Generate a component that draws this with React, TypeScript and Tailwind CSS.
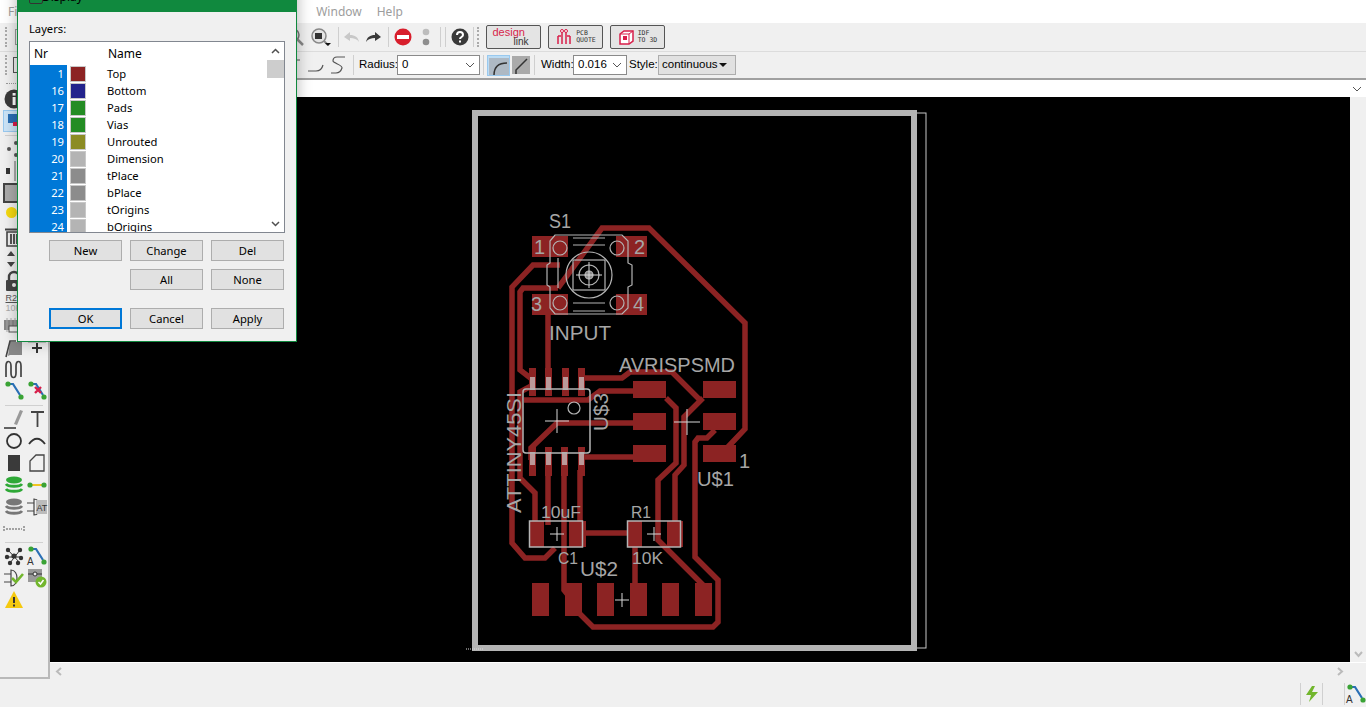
import React from "react";

const UI = { fontFamily: '"Noto Sans", "Open Sans", sans-serif' };
const TB = { fontFamily: '"Liberation Sans", Arial, sans-serif' };
const RED = "#8c2323";
const GR = "#b4b4b4";

function Ic({ children, w = 22, h = 22 }: { children: React.ReactNode; w?: number; h?: number }) {
  return (
    <svg width={w} height={h} viewBox={`0 0 ${w} ${h}`} className="block shrink-0">
      {children}
    </svg>
  );
}

function Route({ x = false, a = false }: { x?: boolean; a?: boolean }) {
  return (
    <Ic>
      <path d="M5 4H10L17 15" fill="none" stroke="#2a6fb5" strokeWidth="2.2" />
      <circle cx="5" cy="4" r="2.6" fill="#3aa335" />
      <circle cx="18" cy="17" r="2.6" fill="#3aa335" />
      {x && <path d="M9 7l6 6M15 7l-6 6" stroke="#d81e4a" strokeWidth="2.4" />}
      {a && <text x="1" y="20" fontSize="10" fill="#333" fontFamily="Liberation Sans">A</text>}
    </Ic>
  );
}

function Stack({ c }: { c: string }) {
  return (
    <Ic>
      <ellipse cx="11" cy="6" rx="8" ry="3.4" fill={c} />
      <path d="M3 10c2 3 14 3 16 0M3 15c2 3 14 3 16 0" fill="none" stroke={c} strokeWidth="2.8" />
    </Ic>
  );
}

function Gate({ check = false }: { check?: boolean }) {
  return (
    <Ic>
      <path d="M8 3c8 0 8 16 0 16V3z M1 7h7M1 15h7" fill="none" stroke="#444" strokeWidth="1.2" />
      {check ? (
        <path d="M9 11l4 4 7-8" fill="none" stroke="#72b62d" strokeWidth="2.6" />
      ) : (
        <>
          <rect x="10" y="4" width="11" height="14" fill="#bbb" />
          <text x="10.5" y="15" fontSize="9" fill="#333" fontFamily="Liberation Sans">AT</text>
        </>
      )}
    </Ic>
  );
}

function Row({ a, b }: { a?: React.ReactNode; b?: React.ReactNode }) {
  return (
    <div className="grid h-[22px] grid-cols-[23px_23px] pl-[2px]">
      <div className="flex items-center justify-center">{a}</div>
      <div className="flex items-center justify-center">{b}</div>
    </div>
  );
}

function Sep({ h }: { h: string }) {
  return (
    <div className={`flex items-center px-[5px] ${h}`}>
      <div className="h-px w-full bg-[#d0d0d0]" />
    </div>
  );
}

function Sidebar() {
  return (
    <div className="flex h-[601px] w-[50px] shrink-0 flex-col border-r-2 border-b-2 border-[#b9b9b9] bg-[#f0f0f0]">
      <div className="flex h-[10px] items-center pl-[6px]">
        <div className="h-px w-[30px] border-t border-dotted border-[#999]" />
      </div>
      <Row a={<Ic><circle cx="11" cy="11" r="9.5" fill="#3a3a3a" /><rect x="9.6" y="9" width="3" height="8" fill="#fff" /><rect x="9.6" y="5" width="3" height="2.6" fill="#fff" /></Ic>} />
      <div className="mx-[3px] flex h-[22px] w-[22px] items-center justify-center border border-[#99c9ef] bg-[#cce4f7]">
        <Ic w={18} h={18}>
          <rect x="3" y="2" width="9" height="9" fill="#2a6fb5" />
          <rect x="8" y="10" width="9" height="4" fill="#d81e4a" />
          <rect x="12" y="14" width="5" height="3" fill="#3aa335" />
        </Ic>
      </div>
      <Sep h="h-[6px]" />
      <Row a={<Ic><g fill="#555"><circle cx="6" cy="11" r="2" /><circle cx="13" cy="5" r="2" /><circle cx="13" cy="17" r="2" /><circle cx="18" cy="11" r="2" /></g></Ic>} />
      <Row a={<Ic><rect x="3" y="8" width="4" height="6" fill="#333" /><rect x="11" y="1" width="2" height="20" fill="#aaa" /></Ic>} />
      <Row a={<Ic><rect x="1" y="2" width="20" height="18" fill="#aaa" stroke="#444" strokeWidth="2" /></Ic>} />
      <Row a={<div className="-mt-[6px] -ml-[4px] h-[11px] w-[11px] rounded-full bg-[#f5d90f]" />} />
      <Row a={<Ic><path d="M2 3.500h18" stroke="#444" strokeWidth="2" /><path d="M4 6h14v14H4z" fill="#eee" stroke="#444" strokeWidth="1.600" /><path d="M8 8v10M11 8v10M14 8v10" stroke="#444" strokeWidth="1.800" /></Ic>} />
      <Row a={<Ic><path d="M8 3l4 5H4zM8 19l4-5H4z" fill="#444" /><path d="M15 3h6M15 19h6" stroke="#888" strokeWidth="2" /></Ic>} />
      <Row a={<Ic><path d="M6 10V7a5 5 0 0110 0v3" fill="none" stroke="#444" strokeWidth="2.400" /><rect x="3" y="10" width="16" height="11" rx="1" fill="#444" /><circle cx="11" cy="15" r="2" fill="#eee" /></Ic>} />
      <Row a={<div className="flex flex-col text-[9px] leading-[10px] text-[#555] [font-family:'Liberation_Sans']"><span className="underline">R2</span><span className="text-[#aaa]">10K</span></div>} />
      <Row a={<Ic><rect x="1" y="6" width="20" height="10" fill="#888" /><path d="M4 4v14M8 4v14M12 4v14M16 4v14" stroke="#aaa" strokeWidth="1" /><rect x="6" y="12" width="12" height="6" fill="#eee" stroke="#555" /></Ic>} />
      <Row
        a={<Ic><path d="M5 20l2-14h12v13H7" fill="#888" /><path d="M3 21L7 5h6" fill="none" stroke="#444" strokeWidth="1.600" /></Ic>}
        b={<Ic><path d="M2 3h18M2 6h18" stroke="#999" /><path d="M11 7v10M6 12h10" stroke="#333" strokeWidth="2" /></Ic>}
      />
      <Row a={<Ic><path d="M2 19V8c0-6 5-6 5 0v7c0 6 5 6 5 0V8c0-6 5-6 5 0v11" transform="translate(1 0)" fill="none" stroke="#444" strokeWidth="1.700" /></Ic>} />
      <Row a={<Route />} b={<Route x />} />
      <Sep h="h-[6px]" />
      <Row
        a={<Ic><path d="M1 20h12" stroke="#333" strokeWidth="1.500" /><path d="M11 16l6-14 3 1-6 14z" fill="#999" /></Ic>}
        b={<Ic><path d="M5 4h13M11.500 4v15" fill="none" stroke="#444" strokeWidth="1.800" /></Ic>}
      />
      <Row
        a={<Ic><circle cx="11" cy="11" r="7" fill="none" stroke="#333" strokeWidth="1.800" /></Ic>}
        b={<Ic><path d="M3 14c5-7 11-7 16 0" fill="none" stroke="#333" strokeWidth="1.800" /></Ic>}
      />
      <Row
        a={<div className="h-[16px] w-[12px] bg-[#3a3a3a]" />}
        b={<Ic><path d="M4 9L10 3h8v16H4z" fill="none" stroke="#444" strokeWidth="1.300" /></Ic>}
      />
      <Row
        a={<Stack c="#2ea836" />}
        b={<Ic><path d="M4 11h14" stroke="#f0c420" strokeWidth="2" /><circle cx="4" cy="11" r="2.600" fill="#3aa335" /><circle cx="18" cy="11" r="2.600" fill="#3aa335" /></Ic>}
      />
      <Row a={<Stack c="#777" />} b={<Gate />} />
      <Row a={<Ic><path d="M1 8v6M21 8v6M3 11h16" stroke="#555" strokeWidth="1" strokeDasharray="2 1" /></Ic>} />
      <Sep h="h-[5px]" />
      <Row
        a={<Ic><g fill="#333"><circle cx="11" cy="11" r="2.600" /><circle cx="5" cy="5" r="2.200" /><circle cx="17" cy="5" r="2.200" /><circle cx="4" cy="12" r="2.200" /><circle cx="18" cy="13" r="2.200" /><circle cx="7" cy="18" r="2.200" /><circle cx="15" cy="18" r="2.200" /></g><path d="M5 5l12 13M17 5L7 18M4 12h14" stroke="#333" /></Ic>}
        b={<Route a />}
      />
      <Row
        a={<Gate check />}
        b={<Ic><rect x="2" y="2" width="14" height="13" fill="#999" /><path d="M2 7h14" stroke="#333" /><circle cx="9" cy="7" r="2" fill="#eee" stroke="#333" /><circle cx="15" cy="15" r="5.500" fill="#72b62d" /><path d="M12.500 15l2 2 3-4" fill="none" stroke="#fff" strokeWidth="1.500" /></Ic>}
      />
      <Row a={<Ic><path d="M11 2l9 17H2z" fill="#f5c90f" /><path d="M11 8v6M11 15.500v2" stroke="#333" strokeWidth="2" /></Ic>} />
    </div>
  );
}

function VSep({ ml = "ml-0" }: { ml?: string }) {
  return <div className={`h-[20px] w-px shrink-0 bg-[#cfcfcf] ${ml}`} />;
}

function Dots() {
  return <div className="h-[20px] w-[3px] border-l-2 border-dotted border-[#aaa]" />;
}

function ExtBtn({ children }: { children: React.ReactNode }) {
  return (
    <div className="flex h-[24px] w-[55px] items-center justify-center gap-[3px] rounded-[2px] border border-[#555] bg-[#e4e4e4]">
      {children}
    </div>
  );
}

function Toolbar1() {
  return (
    <div className="flex h-[29px] items-center border-b border-[#dcdcdc] bg-[#f0f0f0]">
      <div className="ml-[5px]"><Dots /></div>
      <div className="ml-[7px] h-[16px] w-[6px] border border-[#999]" />
      <div className="w-[265px]" />
      <Ic>
        <circle cx="7" cy="9" r="6" fill="#ddd" stroke="#777" strokeWidth="1.500" />
        <path d="M11 13l6 6" stroke="#888" strokeWidth="2.500" />
      </Ic>
      <div className="w-[2px]" />
      <Ic>
        <circle cx="9" cy="10" r="7" fill="#e4e4e4" stroke="#888" strokeWidth="1.500" />
        <rect x="5" y="7" width="7" height="6" fill="#333" />
        <path d="M14 15l4 4" stroke="#888" strokeWidth="2" />
        <path d="M15 17h6l-3 3z" fill="#111" />
      </Ic>
      <VSep ml="ml-[6px]" />
      <div className="ml-[1px]"><Ic><path d="M4 11l6-5v3c5 0 8 2 9 7-2-3-5-4-9-4v3z" fill="#c8c8c8" /></Ic></div>
      <div className="ml-[1px]"><Ic><path d="M18 11l-6-5v3c-5 0-8 2-9 7 2-3 5-4 9-4v3z" fill="#3a3a3a" /></Ic></div>
      <VSep ml="ml-[3px]" />
      <div className="ml-[3px]"><Ic><circle cx="11" cy="11" r="8.500" fill="#d81e2c" /><rect x="5" y="9" width="12" height="4" fill="#fff" /></Ic></div>
      <div className="ml-[1px]"><Ic><circle cx="11" cy="6" r="3.300" fill="#bdbdbd" /><circle cx="11" cy="16" r="3.300" fill="#8e8e8e" /></Ic></div>
      <VSep ml="ml-[3px]" />
      <VSep ml="ml-[4px]" />
      <div className="ml-[3px]"><Ic><circle cx="11" cy="11" r="8.500" fill="#3a3a3a" /><path d="M8 9c0-4 6-4 6 0 0 2-3 2-3 4" fill="none" stroke="#fff" strokeWidth="2" /><rect x="10" y="14.500" width="2" height="2" fill="#fff" /></Ic></div>
      <VSep ml="ml-[2px]" />
      <div className="ml-[3px]"><Dots /></div>
      <div className="ml-[6px] flex gap-[7px] [font-family:'DejaVu_Sans_Mono']">
        <ExtBtn>
          <div className="relative h-[20px] w-[44px] text-[10px] leading-[10px] [font-family:'Liberation_Sans']">
            <span className="absolute left-[1px] top-0 text-[11px] text-[#d81e4a]">design</span>
            <span className="absolute left-[22px] top-[10px] text-[#333]">link</span>
          </div>
        </ExtBtn>
        <ExtBtn>
          <Ic w={18} h={18}>
            <path d="M3 8v8M7 3v13M11 3v13M15 8v8M3 8h3M12 8h3" fill="none" stroke="#d81e4a" strokeWidth="1.500" />
            <circle cx="7" cy="3" r="1.500" fill="#fff" stroke="#d81e4a" />
            <circle cx="11" cy="3" r="1.500" fill="#fff" stroke="#d81e4a" />
          </Ic>
          <div className="text-[6.5px] leading-[7px] text-[#333]">PCB<br />QUOTE</div>
        </ExtBtn>
        <ExtBtn>
          <Ic w={17} h={17}>
            <path d="M2 5l4-3h9v10l-4 3H2z" fill="#fff" stroke="#d81e4a" strokeWidth="1.500" />
            <path d="M2 5h9v10M11 5l4-3" fill="none" stroke="#d81e4a" />
            <rect x="5" y="7" width="4" height="4" fill="#d81e4a" />
          </Ic>
          <div className="text-[6.5px] leading-[7px] text-[#333]">IDF<br />TO 3D</div>
        </ExtBtn>
      </div>
    </div>
  );
}

function Select({ w, value }: { w: string; value: string }) {
  return (
    <div className={`flex h-[20px] items-center justify-between border border-[#8a8a8a] bg-white pl-[4px] pr-[4px] ${w}`}>
      <span>{value}</span>
      <svg width="10" height="6" viewBox="0 0 10 6"><path d="M1 1l4 4 4-4" fill="none" stroke="#555" /></svg>
    </div>
  );
}

function Toolbar2() {
  return (
    <div className="flex h-[26px] items-center bg-[#f0f0f0] text-[11.5px] text-black" style={TB}>
      <div className="ml-[5px]"><Dots /></div>
      <div className="ml-[5px] h-[16px] w-[8px] border border-[#555]" />
      <div className="w-[276px]" />
      <svg width="50" height="20" viewBox="0 0 50 20" className="shrink-0">
        <path d="M0 5h3M11 16h8c3 0 6-2 7-6M48 2h-8c-3 0-4 2-4 4s10 4 9 7c-1 3-3 5-6 5h-5" fill="none" stroke="#555" strokeWidth="1.200" />
      </svg>
      <VSep ml="ml-[6px]" />
      <span className="ml-[5px] w-[38px]">Radius:</span>
      <Select w="w-[83px]" value="0" />
      <VSep ml="ml-[3px]" />
      <div className="ml-[3px] flex h-[21px] w-[23px] items-end justify-center border border-[#99c9ef] bg-[#bcdcf4]">
        <svg width="20" height="17" viewBox="0 0 20 17"><rect x="0" y="0" width="20" height="17" fill="#aeb9c4" /><path d="M5 17c0-8 4-12 13-12" fill="none" stroke="#333" strokeWidth="1.500" /></svg>
      </div>
      <div className="ml-[2px] h-[18px] w-[18px]">
        <svg width="18" height="18" viewBox="0 0 18 18"><rect width="18" height="18" fill="#aaa" /><path d="M4 18v-4l11-11" fill="none" stroke="#333" strokeWidth="1.500" /></svg>
      </div>
      <VSep ml="ml-[4px]" />
      <span className="ml-[6px] w-[32px]">Width:</span>
      <Select w="w-[54px]" value="0.016" />
      <span className="ml-[2px] w-[29px]">Style:</span>
      <div className="flex h-[20px] w-[78px] items-center justify-between border border-[#adadad] bg-[#e1e1e1] pl-[3px] pr-[8px]">
        <span>continuous</span>
        <svg width="8" height="5" viewBox="0 0 8 5"><path d="M0 0h8L4 4z" fill="#111" /></svg>
      </div>
    </div>
  );
}

const layers: [number, string, string][] = [
  [1, "Top", "#8c2323"],
  [16, "Bottom", "#23238c"],
  [17, "Pads", "#238c23"],
  [18, "Vias", "#238c23"],
  [19, "Unrouted", "#8c8c23"],
  [20, "Dimension", "#b4b4b4"],
  [21, "tPlace", "#8c8c8c"],
  [22, "bPlace", "#8c8c8c"],
  [23, "tOrigins", "#b4b4b4"],
  [24, "bOrigins", "#b4b4b4"],
];

function Btn({ label, def = false }: { label: string; def?: boolean }) {
  return (
    <div
      className={`flex h-[21px] w-[73px] items-center justify-center bg-[#e1e1e1] ${
        def ? "border-2 border-[#0078d7]" : "border border-[#adadad]"
      }`}
    >
      {label}
    </div>
  );
}

function Dialog() {
  return (
    <div
      className="absolute left-[17px] top-[-19px] w-[280px] border border-[#10893e] bg-[#f0f0f0] text-[11.2px] leading-none text-black shadow-[0_0_14px_rgba(0,0,0,0.3)]"
      style={UI}
    >
      <div className="flex h-[30px] items-center bg-[#10893e] pl-[11px] text-[12px]">
        <div className="h-[14px] w-[14px] rounded-[2px] border border-[#333]" />
        <span className="ml-[-2px] pl-[0px] translate-x-[1px]">Display</span>
      </div>
      <div className="flex flex-col px-[11px] pt-[11px] pb-[12px]">
        <div className="mb-[6px] h-[12px] leading-[12px]">Layers:</div>
        <div className="flex h-[192px] w-[256px] overflow-hidden border border-[#828790] bg-white">
          <div className="w-[237px] shrink-0 overflow-hidden">
            <div className="flex h-[23px] items-center">
              <span className="w-[37px] pl-[4px] text-[12px]">Nr</span>
              <span className="w-[37px]" />
              <span className="pl-[4px] text-[12px]">Name</span>
            </div>
            {layers.map(([n, name, c]) => (
              <div key={n} className="flex h-[17px] items-center">
                <div className="flex h-full w-[37px] items-center justify-end bg-[#0078d7] pr-[3px] text-white">{n}</div>
                <div className="flex h-full w-[37px] items-center pl-[3px]">
                  <div className="h-[16px] w-[16px] border border-[#c8c8c8]" style={{ backgroundColor: c }} />
                </div>
                <div className="pl-[3px]">{name}</div>
              </div>
            ))}
          </div>
          <div className="flex w-[17px] flex-col items-center bg-white">
            <div className="flex h-[18px] items-center justify-center">
              <svg width="9" height="6" viewBox="0 0 9 6"><path d="M1 5l3.500-3.500L8 5" fill="none" stroke="#505050" strokeWidth="1.500" /></svg>
            </div>
            <div className="h-[18px] w-full bg-[#cdcdcd]" />
            <div className="flex-1" />
            <div className="flex h-[17px] items-center justify-center">
              <svg width="9" height="6" viewBox="0 0 9 6"><path d="M1 1l3.500 3.500L8 1" fill="none" stroke="#505050" strokeWidth="1.500" /></svg>
            </div>
          </div>
        </div>
        <div className="mt-[7px] ml-[20px] flex gap-[8px]">
          <Btn label="New" />
          <Btn label="Change" />
          <Btn label="Del" />
        </div>
        <div className="mt-[8px] ml-[101px] flex gap-[8px]">
          <Btn label="All" />
          <Btn label="None" />
        </div>
        <div className="mt-[18px] ml-[20px] flex gap-[8px]">
          <Btn label="OK" def />
          <Btn label="Cancel" />
          <Btn label="Apply" />
        </div>
      </div>
    </div>
  );
}

function Cross({ x, y, s }: { x: number; y: number; s: number }) {
  return <path d={`M${x - s} ${y}H${x + s}M${x} ${y - s}V${y + s}`} stroke="#d8d8d8" strokeWidth="1" fill="none" />;
}

function T({ x, y, w, s, t, rot }: { x: number; y: number; w?: number; s: number; t: string; rot?: boolean }) {
  return (
    <text
      x={rot ? 0 : x}
      y={rot ? 0 : y}
      fontSize={s}
      fill="#a6a6a6"
      fontFamily='"Liberation Sans", sans-serif'
      textLength={w}
      lengthAdjust="spacingAndGlyphs"
      transform={rot ? `translate(${x} ${y}) rotate(-90)` : undefined}
    >
      {t}
    </text>
  );
}

const traces = [
  "M558 288L602 228H649L745 323V429L727 448L720 452",
  "M558 288H523L520 292V370L533 380",
  "M560 265H533L512 287V543L525 558H545L555 548",
  "M548 315V380",
  "M585 378H622L630 372H672L700 400",
  "M703 398L684 417V465L675 475V525",
  "M666 398L676 408V463L658 480V540L703 585",
  "M715 430L707 438H698L695 442V557L718 580V622L713 627H593L575 609",
  "M533 385L520 392V478L535 493V525",
  "M524 400H588L600 391H633",
  "M633 423H557L531 448V460",
  "M633 457H582V476",
  "M548 470V525",
  "M564 470V590L572 600",
  "M580 470V525",
  "M585 533H630",
  "M635 545V585",
];

const pads: [number, number, number, number][] = [
  [532, 236, 36, 21], [616, 236, 31, 21], [532, 294, 36, 21], [616, 294, 31, 21],
  [633, 381, 33, 17], [633, 413, 33, 17], [633, 445, 33, 17],
  [703, 381, 33, 17], [703, 413, 33, 17], [703, 445, 33, 17],
  [529, 368, 7, 28], [545, 368, 7, 28], [562, 368, 7, 28], [578, 368, 7, 28],
  [529, 447, 7, 29], [545, 447, 7, 29], [561, 447, 7, 29], [578, 447, 7, 29],
  [530, 521, 14, 26], [569, 521, 17, 26], [627, 521, 15, 26], [667, 521, 16, 26],
  [532, 583, 17, 33], [565, 583, 17, 33], [597, 583, 17, 33], [630, 583, 17, 33], [662, 583, 17, 33], [695, 583, 17, 33],
];

function Board() {
  return (
    <svg width="1300" height="565" viewBox="50 97 1300 565" className="block">
      <rect x="475" y="113" width="451" height="535" fill="none" stroke="#c8c8c8" strokeWidth="1" />
      <rect x="475" y="113" width="439" height="535" fill="none" stroke={GR} strokeWidth="6" />
      <path d="M466 649h18" stroke="#ddd" strokeWidth="1" strokeDasharray="1 1" />
      <g fill="none" stroke={RED} strokeWidth="5.500" strokeLinejoin="miter">
        {traces.map((d) => (
          <path key={d} d={d} />
        ))}
      </g>
      <g fill={RED}>
        {pads.map(([x, y, w, h]) => (
          <rect key={`${x}-${y}`} x={x} y={y} width={w} height={h} />
        ))}
      </g>
      <g fill="#bb9a9a">
        {[530, 546, 563, 579].map((x) => (
          <rect key={x} x={x} y="377" width="5" height="13" />
        ))}
        {[530, 546, 562, 579].map((x) => (
          <rect key={x} x={x} y="452" width="5" height="13" />
        ))}
      </g>
      <g fill="none" stroke={GR} strokeWidth="1.200">
        <path d="M555 235H622L628 241V263L632 265V285L628 287V308L622 314H555L550 308V287L547 285V265L550 263V241Z" />
        <circle cx="560" cy="248" r="7" />
        <circle cx="617" cy="248" r="7" />
        <circle cx="560" cy="303" r="7" />
        <circle cx="617" cy="303" r="7" />
        <circle cx="589" cy="275" r="23" />
        <circle cx="589" cy="275" r="10" />
        <circle cx="589" cy="275" r="4" fill="#888" />
        <rect x="573" y="260" width="32" height="30" />
        <path d="M573 245H605M573 303H605M573 238H605M573 311H605M558 258V288" />
        <rect x="523" y="389" width="67" height="64" rx="3" strokeWidth="1.500" />
        <circle cx="574" cy="408" r="6" />
        <rect x="529.500" y="521" width="53" height="26" strokeWidth="1.500" />
        <rect x="627.500" y="521" width="53" height="26" strokeWidth="1.500" />
      </g>
      <Cross x={589} y={275} s={13} />
      <Cross x={557} y={421} s={12} />
      <Cross x={687} y={422} s={13} />
      <Cross x={557} y={534} s={7} />
      <Cross x={654} y={534} s={7} />
      <Cross x={622} y={600} s={7} />
      <T x={549} y={228} w={22} s={20} t="S1" />
      <T x={549} y={340} w={62} s={20} t="INPUT" />
      <T x={619} y={372} w={116} s={20} t="AVRISPSMD" />
      <T x={534} y={254} s={20} t="1" />
      <T x={634} y={254} s={20} t="2" />
      <T x={531} y={311} s={20} t="3" />
      <T x={633} y={311} s={20} t="4" />
      <T x={739} y={468} s={20} t="1" />
      <T x={697} y={486} w={37} s={20} t="U$1" />
      <T x={541} y={518} w={40} s={17} t="10uF" />
      <T x={631} y={518} w={20} s={17} t="R1" />
      <T x={558} y={564} w={20} s={17} t="C1" />
      <T x={632} y={564} w={31} s={17} t="10K" />
      <T x={580} y={576} w={38} s={20} t="U$2" />
      <T x={521} y={513} w={121} s={20} t="ATTINY45SI" rot />
      <T x={608} y={431} w={38} s={20} t="U$3" rot />
    </svg>
  );
}

export default function App() {
  return (
    <div className="relative flex h-[707px] w-[1366px] flex-col overflow-hidden bg-[#f0f0f0]">
      <div className="flex h-[23px] items-center bg-white text-[12px] text-[#9d9d9d]" style={UI}>
        <span className="ml-[8px]">File</span>
        <span className="ml-[289px]">Window</span>
        <span className="ml-[15px]">Help</span>
      </div>
      <Toolbar1 />
      <Toolbar2 />
      <div className="flex min-h-0 flex-1">
        <Sidebar />
        <div className="flex min-w-0 flex-1 flex-col">
          <div className="flex h-[19px] items-center justify-end border-t-2 border-[#a0a0a0] bg-white pr-[4px]">
            <svg width="10" height="6" viewBox="0 0 10 6"><path d="M1 1l4 4 4-4" fill="none" stroke="#555" /></svg>
          </div>
          <div className="flex h-[565px]">
            <div className="h-[565px] w-[1300px] bg-black">
              <Board />
            </div>
            <div className="flex w-[16px] flex-col items-center justify-end bg-[#f0f0f0] pb-[4px]">
              <svg width="9" height="7" viewBox="0 0 9 7"><path d="M1 1l3.500 4L8 1" fill="none" stroke="#bbb" strokeWidth="2" /></svg>
            </div>
          </div>
          <div className="flex h-[18px] items-center justify-between border-t border-white bg-[#f0f0f0] pl-[5px] pr-[22px]">
            <svg width="7" height="9" viewBox="0 0 7 9"><path d="M6 1L2 4.500 6 8" fill="none" stroke="#bbb" strokeWidth="2" /></svg>
            <svg width="7" height="9" viewBox="0 0 7 9"><path d="M1 1l4 3.500L1 8" fill="none" stroke="#bbb" strokeWidth="2" /></svg>
          </div>
        </div>
      </div>
      <div className="flex h-[27px] items-center justify-end bg-[#f0f0f0]">
        <div className="h-[22px] w-px bg-[#d0d0d0]" />
        <div className="flex w-[21px] justify-center">
          <svg width="14" height="16" viewBox="0 0 14 16"><path d="M7 0L1 9h5l-2 7 9-10H7l3-6z" fill="#72b62d" /></svg>
        </div>
        <div className="h-[22px] w-px bg-[#d0d0d0]" />
        <div className="w-[21px]" />
        <div className="h-[22px] w-px bg-[#d0d0d0]" />
        <div className="flex w-[21px] justify-center">
          <Route a />
        </div>
      </div>
      <Dialog />
    </div>
  );
}
